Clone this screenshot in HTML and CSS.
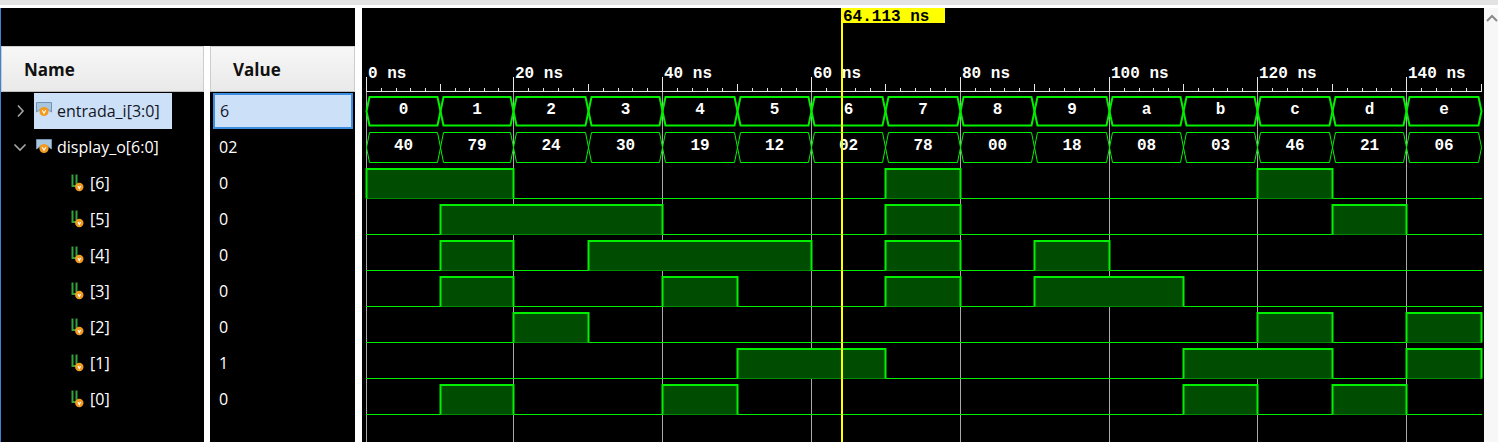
FILE: index.html
```html
<!DOCTYPE html>
<html lang="en">
<head>
<meta charset="utf-8">
<title>Waveform</title>
<link rel="stylesheet" href="styles.css">
</head>
<body>
<div class="topstrip"></div>
<div class="main">
  <div class="left">
    <div class="left-top"></div>
    <div class="cols">
      <div class="col names">
        <div class="hdr">Name</div>
        <div class="row first">
          <span class="twisty"><svg width="10" height="14" viewBox="0 0 10 14"><path d="M3 1.5 L8 7 L3 12.5" class="chev"/></svg></span>
          <span class="hl sel">
            <svg class="busicon" width="16" height="15" viewBox="0 0 16 15"><path d="M0.5 0.5 H15.5 V10 L11 7 H5 L0.5 10 Z" class="bi-body"/><circle cx="8" cy="9.5" r="4.6" class="bi-dot"/><path d="M6.3 8.2 L8 11.4 L9.7 8.2" class="bi-v"/></svg>
            <span class="sig dark">entrada_i[3:0]</span>
          </span>
        </div>
        <div class="row">
          <span class="twisty"><svg width="14" height="10" viewBox="0 0 14 10"><path d="M1.5 2.5 L7 8 L12.5 2.5" class="chev"/></svg></span>
          <span class="hl">
            <svg class="busicon" width="16" height="15" viewBox="0 0 16 15"><path d="M0.5 0.5 H15.5 V10 L11 7 H5 L0.5 10 Z" class="bi-body"/><circle cx="8" cy="9.5" r="4.6" class="bi-dot"/><path d="M6.3 8.2 L8 11.4 L9.7 8.2" class="bi-v"/></svg>
            <span class="sig">display_o[6:0]</span>
          </span>
        </div>
        <div class="row bitrow"><svg class="biticon" width="13" height="18" viewBox="0 0 13 18"><path d="M1.5 0.5 V12 H5.5 V0.5" class="bt-g"/><circle cx="8.3" cy="13" r="4.2" class="bi-dot"/><path d="M7 12 L8.3 14.6 L9.6 12" class="bi-v"/></svg><span class="sig">[6]</span></div>
        <div class="row bitrow"><svg class="biticon" width="13" height="18" viewBox="0 0 13 18"><path d="M1.5 0.5 V12 H5.5 V0.5" class="bt-g"/><circle cx="8.3" cy="13" r="4.2" class="bi-dot"/><path d="M7 12 L8.3 14.6 L9.6 12" class="bi-v"/></svg><span class="sig">[5]</span></div>
        <div class="row bitrow"><svg class="biticon" width="13" height="18" viewBox="0 0 13 18"><path d="M1.5 0.5 V12 H5.5 V0.5" class="bt-g"/><circle cx="8.3" cy="13" r="4.2" class="bi-dot"/><path d="M7 12 L8.3 14.6 L9.6 12" class="bi-v"/></svg><span class="sig">[4]</span></div>
        <div class="row bitrow"><svg class="biticon" width="13" height="18" viewBox="0 0 13 18"><path d="M1.5 0.5 V12 H5.5 V0.5" class="bt-g"/><circle cx="8.3" cy="13" r="4.2" class="bi-dot"/><path d="M7 12 L8.3 14.6 L9.6 12" class="bi-v"/></svg><span class="sig">[3]</span></div>
        <div class="row bitrow"><svg class="biticon" width="13" height="18" viewBox="0 0 13 18"><path d="M1.5 0.5 V12 H5.5 V0.5" class="bt-g"/><circle cx="8.3" cy="13" r="4.2" class="bi-dot"/><path d="M7 12 L8.3 14.6 L9.6 12" class="bi-v"/></svg><span class="sig">[2]</span></div>
        <div class="row bitrow"><svg class="biticon" width="13" height="18" viewBox="0 0 13 18"><path d="M1.5 0.5 V12 H5.5 V0.5" class="bt-g"/><circle cx="8.3" cy="13" r="4.2" class="bi-dot"/><path d="M7 12 L8.3 14.6 L9.6 12" class="bi-v"/></svg><span class="sig">[1]</span></div>
        <div class="row bitrow"><svg class="biticon" width="13" height="18" viewBox="0 0 13 18"><path d="M1.5 0.5 V12 H5.5 V0.5" class="bt-g"/><circle cx="8.3" cy="13" r="4.2" class="bi-dot"/><path d="M7 12 L8.3 14.6 L9.6 12" class="bi-v"/></svg><span class="sig">[0]</span></div>
      </div>
      <div class="col values">
        <div class="hdr">Value</div>
        <div class="row first"><span class="valbox">6</span></div>
        <div class="row val">02</div>
        <div class="row val">0</div>
        <div class="row val">0</div>
        <div class="row val">0</div>
        <div class="row val">0</div>
        <div class="row val">0</div>
        <div class="row val">1</div>
        <div class="row val">0</div>
      </div>
    </div>
  </div>
  <div class="sep"></div>
  <div class="wave">
    <svg id="wave" width="1122" height="434" viewBox="362 8 1122 434"></svg>
  </div>
  <div class="scroll">
    <svg width="14" height="12" viewBox="0 0 14 12"><path d="M3 9 L8 4 L13 9" class="up"/></svg>
  </div>
</div>
<script src="script.js"></script>
</body>
</html>
```

FILE: styles.css
```css
* { box-sizing: border-box; }
html, body { margin: 0; padding: 0; }
body {
  width: 1498px;
  height: 442px;
  overflow: hidden;
  background: #ffffff;
  font-family: "Open Sans", "Noto Sans", sans-serif;
}
.topstrip { height: 5px; background: #e3e3e3; margin-bottom: 3px; }
.main { display: flex; height: 434px; }
.left {
  width: 355px;
  display: flex;
  flex-direction: column;
  border-left: 1px solid #3f7fd6;
}
.left-top { height: 38px; background: #000; }
.cols { flex: 1; display: flex; gap: 6px; background: #fff; }
.col { background: #000; display: flex; flex-direction: column; }
.names { width: 203px; }
.values { width: 145px; }
.hdr {
  height: 46px;
  background: linear-gradient(#f7f7f7, #e9e9e9);
  border: 1px solid #cdcdcd;
  border-bottom-color: #bdbdbd;
  display: flex;
  align-items: center;
  padding-left: 22px;
  font-weight: 700;
  font-size: 17px;
  color: #111;
}
.row {
  height: 36px;
  display: flex;
  align-items: center;
  color: #fff;
  font-size: 16px;
}
.row.first { height: 37px; }
.twisty { width: 33px; display: flex; justify-content: center; padding-left: 4px; }
.chev { fill: none; stroke: #a6a6a6; stroke-width: 1.6; }
.hl {
  width: 138px;
  height: 36px;
  display: flex;
  align-items: center;
  gap: 5px;
  padding-left: 2px;
}
.hl.sel { background: #cce0f8; }
.busicon { flex: none; margin-top: -2px; }
.bi-body { fill: #a9c6df; stroke: #7393b2; stroke-width: 1; }
.bi-dot { fill: #f39a1e; }
.bi-v { fill: none; stroke: #fff; stroke-width: 1.1; }
.bt-g { fill: none; stroke: #34a03a; stroke-width: 2; }
.sig { white-space: nowrap; line-height: 1; }
.sig.dark { color: #14171f; }
.bitrow { padding-left: 70px; gap: 6px; }
.biticon { flex: none; margin-top: -1px; }
.val { padding-left: 9px; }
.valbox {
  margin-left: 3px;
  width: 140px;
  height: 36px;
  border: 2px solid #3d8ee0;
  background: #cce0f8;
  color: #14171f;
  display: flex;
  align-items: center;
  padding-left: 5px;
}
.sep { width: 7px; background: #fff; }
.wave { width: 1122px; background: #000; }
.wave svg { display: block; }
.scroll { width: 14px; background: #f7f7f7; padding-top: 4px; }
.scroll svg { display: block; }
.up { fill: none; stroke: #8a8a8a; stroke-width: 2; }

/* waveform drawing */
.grid { stroke: #a9a9a9; stroke-width: 1; }
.tick { stroke: #e6e6e6; stroke-width: 1; }
.rlabel { fill: #ffffff; font: bold 16px "Liberation Mono", monospace; }
.bus { fill: none; stroke: #00f000; stroke-width: 1; }
.bus.sel { stroke-width: 2; }
.bval { fill: #ffffff; font: bold 16px "Liberation Mono", monospace; text-anchor: middle; }
.low { stroke: #00f000; stroke-width: 1; }
.fill { fill: #004c00; }
.bot { stroke: #008c00; stroke-width: 1; }
.hi { fill: none; stroke: #00f000; stroke-width: 2; }
.cur { fill: #ffff00; }
.clabel { fill: #000; font: bold 16px "Liberation Mono", monospace; }
```

FILE: script.js
```js
(function () {
  var NS = 'http://www.w3.org/2000/svg';
  var svg = document.getElementById('wave');
  /* pixel columns of every 10 ns step, as measured on screen */
  var COL = [366, 440, 513, 588, 662, 737, 811, 885, 960, 1034, 1109, 1183, 1257, 1332, 1406, 1481];
  function tx(t) {
    var i = Math.min(Math.floor(t / 10), 14);
    var f = (t - i * 10) / 10;
    return COL[i] + (COL[i + 1] - COL[i]) * f;
  }
  function px(x) { return Math.round(x) + 0.5; }
  function el(tag, a, p) {
    var e = document.createElementNS(NS, tag);
    for (var k in a) e.setAttribute(k, a[k]);
    (p || svg).appendChild(e);
    return e;
  }
  var t, x;
  for (t = 0; t <= 140; t += 20) {
    x = px(tx(t));
    el('line', { x1: x, y1: 92, x2: x, y2: 442, 'class': 'grid' });
    el('line', { x1: x, y1: 77, x2: x, y2: 92, 'class': 'tick' });
    el('text', { x: x + 1.5, y: 77.5, 'class': 'rlabel' }).textContent = t + ' ns';
  }
  el('line', { x1: 366, y1: 91.5, x2: 1482, y2: 91.5, 'class': 'tick' });
  for (t = 2; t <= 150; t += 2) {
    if (t % 20 === 0) continue;
    x = px(tx(t));
    var h = (t % 10 === 0) ? 8 : 4;
    el('line', { x1: x, y1: 92 - h, x2: x, y2: 92, 'class': 'tick' });
  }

  var ent = ['0','1','2','3','4','5','6','7','8','9','a','b','c','d','e'];
  var disp = ['40','79','24','30','19','12','02','78','00','18','08','03','46','21','06'];

  function bus(vals, top, bot, cls, ty) {
    var mid = (top + bot) / 2, d = 3;
    vals.forEach(function (v, i) {
      var x0 = tx(i * 10) + 0.5, x1 = tx(i * 10 + 10) + 0.5;
      var pts = [[x0 + d, top], [x1 - d, top], [x1, mid], [x1 - d, bot], [x0 + d, bot], [x0, mid]];
      el('polygon', { points: pts.map(function (p) { return p[0].toFixed(1) + ',' + p[1]; }).join(' '), 'class': cls });
      el('text', { x: ((x0 + x1) / 2).toFixed(1), y: ty, 'class': 'bval' }).textContent = v;
    });
  }
  bus(ent, 97, 125.5, 'bus sel', 114);
  bus(disp, 132.5, 162.5, 'bus', 150);

  var bytes = disp.map(function (s) { return parseInt(s, 16); });
  for (var k = 0; k < 7; k++) {
    var bit = 6 - k;
    var r = 165 + 36 * k;
    var hy = r + 4, ly = r + 33.5;
    el('line', { x1: 366, y1: ly, x2: 1482, y2: ly, 'class': 'low' });
    var i = 0;
    while (i < 15) {
      if ((bytes[i] >> bit) & 1) {
        var j = i;
        while (j < 15 && ((bytes[j] >> bit) & 1)) j++;
        var a = px(tx(i * 10)), b = px(tx(j * 10));
        el('rect', { x: a, y: hy, width: b - a, height: ly - hy, 'class': 'fill' });
        el('line', { x1: a, y1: ly, x2: b, y2: ly, 'class': 'bot' });
        el('path', { d: 'M' + a + ' ' + ly + ' V' + hy + ' H' + b + ' V' + ly, 'class': 'hi' });
        i = j;
      } else {
        i++;
      }
    }
  }

  el('rect', { x: 841, y: 8, width: 2, height: 434, 'class': 'cur' });
  el('rect', { x: 841, y: 8, width: 104, height: 15, 'class': 'cur' });
  el('text', { x: 843, y: 21, 'class': 'clabel' }).textContent = '64.113 ns';
})();
```
